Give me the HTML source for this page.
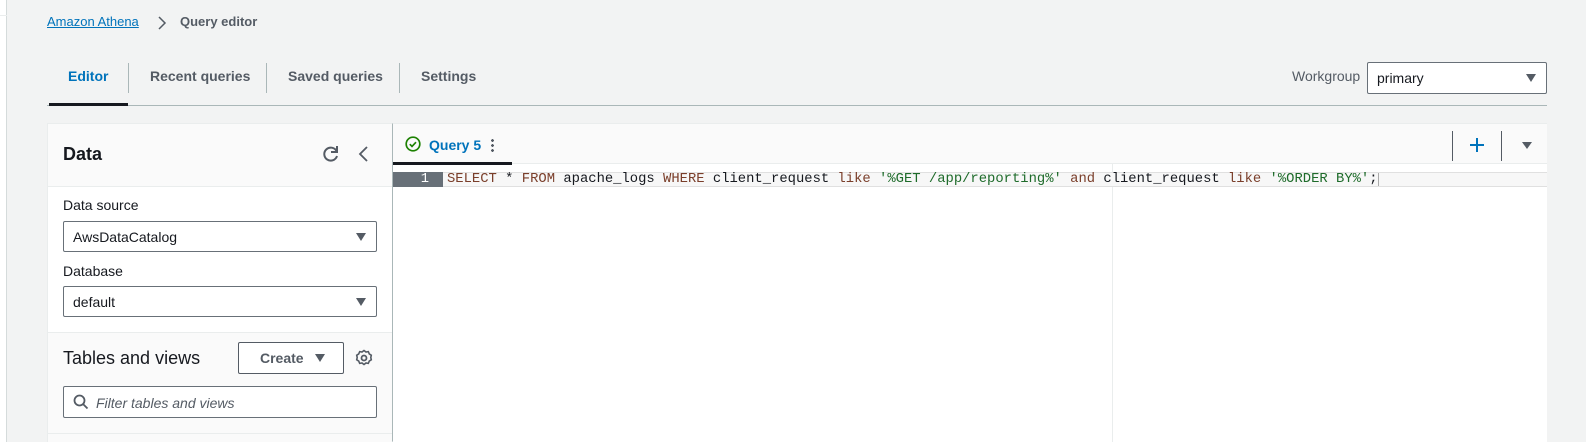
<!DOCTYPE html>
<html style="overflow:hidden"><head><meta charset="utf-8"><style>
*{box-sizing:border-box;margin:0;padding:0}
html,body{overflow:hidden}
body{width:1586px;height:442px;background:#f2f3f3;font-family:"Liberation Sans",sans-serif;position:relative;color:#16191f}
.abs{position:absolute}
.tab{position:absolute;top:68px;font-size:14px;font-weight:bold;color:#545b64}
.sep{position:absolute;top:63px;width:1px;height:30px;background:#aab7b8}
.sel{position:absolute;background:#fff;border:1px solid #687078;border-radius:2px;font-size:14px;padding-left:9px;line-height:30px}
.tri{position:absolute;right:10px;top:11px;width:0;height:0;border-left:5.5px solid transparent;border-right:5.5px solid transparent;border-top:8px solid #545b64}
</style></head><body>
<div class="abs" style="left:0;top:0;width:7px;height:442px;background:#fff;border-right:1px solid #d5dbdb"></div>
<div class="abs" style="left:0;top:15px;width:7px;height:1px;background:#eaeded"></div>
<div class="abs" style="left:47px;top:14px;font-size:13px;color:#0073bb;text-decoration:underline">Amazon Athena</div>
<svg class="abs" style="left:157px;top:16px" width="10" height="14"><path d="M2 1l6 6-6 6" stroke="#545b64" stroke-width="1.5" fill="none"/></svg>
<div class="abs" style="left:180px;top:14px;font-size:13px;font-weight:bold;color:#545b64">Query editor</div>
<div class="tab" style="left:68px;color:#0073bb">Editor</div>
<div class="sep" style="left:128px"></div>
<div class="tab" style="left:150px">Recent queries</div>
<div class="sep" style="left:266px"></div>
<div class="tab" style="left:288px">Saved queries</div>
<div class="sep" style="left:399px"></div>
<div class="tab" style="left:421px">Settings</div>
<div class="abs" style="left:47px;top:105px;width:1500px;height:1px;background:#aab7b8"></div>
<div class="abs" style="left:49px;top:103px;width:79px;height:3px;background:#16191f"></div>
<div class="abs" style="left:1292px;top:68px;font-size:14px;color:#545b64">Workgroup</div>
<div class="sel" style="left:1367px;top:62px;width:180px;height:32px">primary<div class="tri"></div></div>

<div class="abs" style="left:47px;top:123px;width:346px;height:319px;background:#fff;border:1px solid #eaeded;border-right:1px solid #aab7b8">
 <div style="height:63px;background:#fafafa;border-bottom:1px solid #eaeded;position:relative">
  <div class="abs" style="left:15px;top:20px;font-size:18px;font-weight:bold">Data</div>
  <svg class="abs" style="left:273px;top:20px" width="20" height="20" viewBox="0 0 20 20"><path d="M15.5 7A6.5 6.5 0 1 0 16 12" stroke="#545b64" stroke-width="2" fill="none"/><path d="M16 2v6h-6" stroke="#545b64" stroke-width="2" fill="none"/></svg>
  <svg class="abs" style="left:309px;top:20px" width="14" height="20"><path d="M10 3l-7 7 7 7" stroke="#545b64" stroke-width="1.8" fill="none"/></svg>
 </div>
 <div class="abs" style="left:15px;top:73px;font-size:14px">Data source</div>
 <div class="sel" style="left:15px;top:97px;width:314px;height:31px">AwsDataCatalog<div class="tri"></div></div>
 <div class="abs" style="left:15px;top:139px;font-size:14px">Database</div>
 <div class="sel" style="left:15px;top:162px;width:314px;height:31px">default<div class="tri"></div></div>
 <div class="abs" style="left:0;top:208px;width:344px;height:111px;background:#fafafa;border-top:1px solid #eaeded">
  <div class="abs" style="left:15px;top:15px;font-size:18px">Tables and views</div>
  <div class="abs" style="left:190px;top:9px;width:106px;height:32px;border:1px solid #545b64;border-radius:2px;background:#fff;font-size:14px;font-weight:bold;color:#545b64;line-height:30px;padding-left:21px">Create<div class="tri" style="right:18px;top:11px"></div></div>
  <svg class="abs" style="left:307px;top:16px" width="18" height="18" viewBox="0 0 18 18"><circle cx="9" cy="9" r="2.5" stroke="#545b64" stroke-width="1.8" fill="none"/><path d="M9 1.5l2 1.5 2.3-.4 1 2.3 2 1.3-.5 2.3.5 2.3-2 1.3-1 2.3-2.3-.4-2 1.5-2-1.5-2.3.4-1-2.3-2-1.3.5-2.3-.5-2.3 2-1.3 1-2.3 2.3.4z" stroke="#545b64" stroke-width="1.6" fill="none"/></svg>
  <div class="abs" style="left:15px;top:53px;width:314px;height:32px;border:1px solid #687078;border-radius:2px;background:#fff">
   <svg class="abs" style="left:9px;top:7px" width="16" height="16"><circle cx="6.5" cy="6.5" r="5" stroke="#545b64" stroke-width="1.8" fill="none"/><path d="M10 10l4.5 4.5" stroke="#545b64" stroke-width="1.8"/></svg>
   <div class="abs" style="left:32px;top:8px;font-size:14px;font-style:italic;color:#545b64">Filter tables and views</div>
  </div>
  <div class="abs" style="left:0;top:100px;width:344px;height:1px;background:#eaeded"></div>
 </div>
</div>

<div class="abs" style="left:393px;top:123px;width:1154px;height:319px;background:#fff;border-top:1px solid #eaeded">
 <div style="height:40px;background:#fafafa;border-bottom:1px solid #eaeded;position:relative">
  <svg class="abs" style="left:12px;top:12px" width="16" height="16"><circle cx="8" cy="8" r="6.8" stroke="#1d8102" stroke-width="1.7" fill="none"/><path d="M4.8 8.2l2.2 2.2 4-4.2" stroke="#1d8102" stroke-width="1.7" fill="none"/></svg>
  <div class="abs" style="left:36px;top:13px;font-size:14px;font-weight:bold;color:#0073bb">Query 5</div>
  <div class="abs" style="left:98px;top:14px;width:3px;height:14px;background:radial-gradient(circle,#545b64 1.3px,transparent 1.5px) 0 0/3px 5px"></div>
  <div class="abs" style="left:0;top:38px;width:119px;height:3px;background:#16191f"></div>
  <div class="abs" style="left:1059px;top:7px;width:1px;height:30px;background:#545b64"></div>
  <svg class="abs" style="left:1076px;top:13px" width="16" height="16"><path d="M8 1v14M1 8h14" stroke="#0073bb" stroke-width="2"/></svg>
  <div class="abs" style="left:1108px;top:7px;width:1px;height:30px;background:#545b64"></div>
  <div class="tri" style="right:15px;top:18px;border-left-width:5px;border-right-width:5px;border-top-width:7px"></div>
 </div>
 <div class="abs" style="left:719px;top:40px;width:1px;height:279px;background:#eaeded"></div>
 <div class="abs" style="left:0;top:48px;width:1154px;height:15px;background:#f7f7f7;border-top:1px solid #e0e0e0;border-bottom:1px solid #e0e0e0"></div>
 <div class="abs" style="left:0;top:48px;width:50px;height:15px;background:#687078;color:#fff;font-family:'Liberation Mono',monospace;font-size:13.85px;text-align:right;padding-right:14px;line-height:15px">1</div>
 <div class="abs" style="left:54px;top:48px;font-family:'Liberation Mono',monospace;font-size:13.85px;line-height:15px;white-space:pre;color:#16191f"><span style="color:#7a3e2a">SELECT</span> * <span style="color:#7a3e2a">FROM</span> apache_logs <span style="color:#7a3e2a">WHERE</span> client_request <span style="color:#7a3e2a">like</span> <span style="color:#1e6b2a">'%GET /app/reporting%'</span> <span style="color:#7a3e2a">and</span> client_request <span style="color:#7a3e2a">like</span> <span style="color:#1e6b2a">'%ORDER BY%'</span>;</div>
 <div class="abs" style="left:985px;top:49px;width:1px;height:13px;background:#aaa"></div>
</div>
</body></html>
